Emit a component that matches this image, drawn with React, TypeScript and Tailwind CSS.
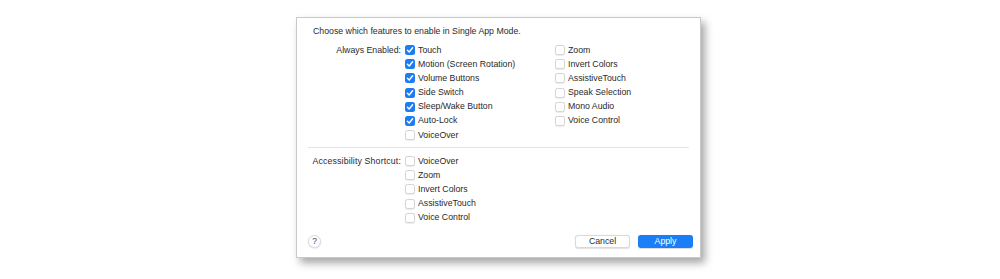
import React from "react";

const font = { fontFamily: '"Liberation Sans", Arial, sans-serif' };

function Box({ checked }: { checked: boolean }) {
  if (checked) {
    return (
      <span className="flex h-[10px] w-[10px] shrink-0 items-center justify-center rounded-[2.5px] bg-[#1c7cf4]">
        <svg width="8" height="8" viewBox="0 0 8 8">
          <path d="M1.4 4.2 L3.2 6 L6.6 1.8" fill="none" stroke="#fff" strokeWidth="1.4" strokeLinecap="round" strokeLinejoin="round" />
        </svg>
      </span>
    );
  }
  return <span className="block h-[10px] w-[10px] shrink-0 rounded-[2.5px] border border-[#d4d4d4] bg-white shadow-[0_0.5px_1px_rgba(0,0,0,0.08)]" />;
}

function Item({ label, checked = false }: { label: string; checked?: boolean }) {
  return (
    <div className="flex h-[14.17px] items-center gap-[3px]">
      <Box checked={checked} />
      <span className="whitespace-nowrap">{label}</span>
    </div>
  );
}

export default function App() {
  const col1: [string, boolean][] = [
    ["Touch", true],
    ["Motion (Screen Rotation)", true],
    ["Volume Buttons", true],
    ["Side Switch", true],
    ["Sleep/Wake Button", true],
    ["Auto-Lock", true],
    ["VoiceOver", false],
  ];
  const col2 = ["Zoom", "Invert Colors", "AssistiveTouch", "Speak Selection", "Mono Audio", "Voice Control"];
  const shortcuts = ["VoiceOver", "Zoom", "Invert Colors", "AssistiveTouch", "Voice Control"];

  return (
    <div className="h-[279px] w-[1000px] bg-white pt-[17px]" style={font}>
      <div className="ml-[296px] w-[405px] border border-[#c9c9c9] bg-white text-[8.75px] leading-none text-[#2a2a2a] shadow-[4px_5px_8px_rgba(0,0,0,0.35)]">
        <div className="pl-[16px] pt-[6px]">
          <div className="flex h-[14px] items-center">Choose which features to enable in Single App Mode.</div>
          <div className="mt-[5px] flex">
            <div className="w-[88px] shrink-0 text-right">
              <div className="flex h-[14.17px] items-center justify-end">Always Enabled:</div>
            </div>
            <div className="ml-[4px] w-[150px] shrink-0">
              {col1.map(([l, c]) => (
                <Item key={l} label={l} checked={c} />
              ))}
            </div>
            <div>
              {col2.map((l) => (
                <Item key={l} label={l} />
              ))}
            </div>
          </div>
        </div>
        <div className="mx-[11px] mt-[5px] h-px bg-[#e4e4e4]" />
        <div className="mt-[6px] flex pl-[13px]">
          <div className="w-[91px] shrink-0">
            <div className="flex h-[14.17px] items-center justify-end whitespace-nowrap tracking-[0.15px]">Accessibility Shortcut:</div>
          </div>
          <div className="ml-[4px]">
            {shortcuts.map((l) => (
              <Item key={l} label={l} />
            ))}
          </div>
        </div>
        <div className="mt-[10px] flex items-center pb-[9px] pl-[11px] pr-[7px]">
          <div className="flex h-[13px] w-[13px] items-center justify-center rounded-full border border-[#dcdcdc] bg-white text-[8.5px] text-[#444] shadow-[0_0.5px_1.5px_rgba(0,0,0,0.15)]">
            ?
          </div>
          <div className="flex-1" />
          <button className="flex h-[13px] w-[55px] items-center justify-center rounded-[3px] border border-[#dadada] bg-white text-[8.75px] text-[#2a2a2a] shadow-[0_0.5px_1px_rgba(0,0,0,0.12)]">
            Cancel
          </button>
          <button className="ml-[8px] flex h-[13px] w-[55px] items-center justify-center rounded-[3px] bg-[#1a7ff7] text-[8.75px] text-white shadow-[0_0.5px_1px_rgba(0,0,0,0.15)]">
            Apply
          </button>
        </div>
      </div>
    </div>
  );
}
